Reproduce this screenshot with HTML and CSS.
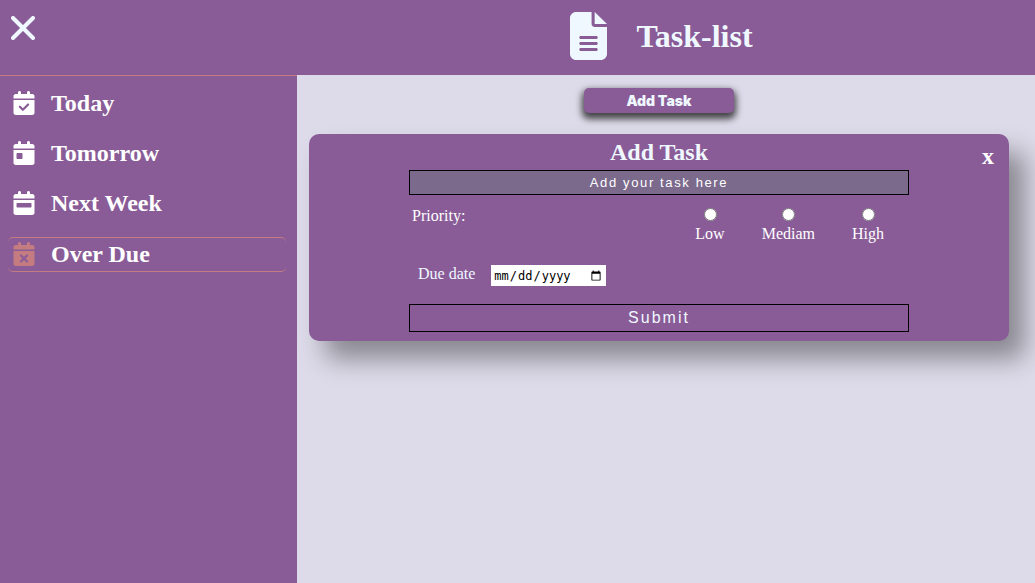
FILE: index.html
```html
<!DOCTYPE html>
<html lang="en">
<head>
<meta charset="utf-8">
<meta name="viewport" content="width=device-width, initial-scale=1">
<title>Task-list</title>
<link rel="stylesheet" href="styles.css">
</head>
<body>
<header class="header">
  <button class="menu-toggle" type="button" aria-label="Close menu">
    <svg class="menu-icon" viewBox="0 0 24 24"><path d="M2 2L22 22M22 2L2 22" fill="none" stroke="currentColor" stroke-width="4" stroke-linecap="round"/></svg>
  </button>
  <div class="brand">
    <svg class="brand-icon" viewBox="0 0 384 512" preserveAspectRatio="none" fill="currentColor"><path fill-rule="evenodd" d="M64 0C28.700 0 0 28.700 0 64V448c0 35.300 28.700 64 64 64H320c35.300 0 64-28.700 64-64V160H256c-17.700 0-32-14.300-32-32V0H64zM256 0V128H384L256 0zM112 256H272c8.800 0 16 7.200 16 16s-7.200 16-16 16H112c-8.800 0-16-7.200-16-16s7.200-16 16-16zm0 64H272c8.800 0 16 7.200 16 16s-7.200 16-16 16H112c-8.800 0-16-7.200-16-16s7.200-16 16-16zm0 64H272c8.800 0 16 7.200 16 16s-7.200 16-16 16H112c-8.800 0-16-7.200-16-16s7.200-16 16-16z"/></svg>
    <h1 class="brand-name">Task-list</h1>
  </div>
</header>
<div class="layout">
  <nav class="sidebar">
    <ul class="nav-list">
      <li><a class="nav-item" href="#today">
        <svg class="nav-icon" viewBox="0 0 448 512" fill="currentColor"><path fill-rule="evenodd" d="M128 0c17.700 0 32 14.300 32 32V64H288V32c0-17.700 14.300-32 32-32s32 14.300 32 32V64h48c26.500 0 48 21.500 48 48v48H0V112C0 85.500 21.500 64 48 64H96V32c0-17.700 14.300-32 32-32zM0 192H448V464c0 26.500-21.500 48-48 48H48c-26.500 0-48-21.500-48-48V192zM329 305c9.400-9.400 9.400-24.600 0-33.900s-24.600-9.400-33.900 0l-95 95-47-47c-9.400-9.400-24.600-9.400-33.900 0s-9.400 24.600 0 33.900l64 64c9.400 9.400 24.600 9.400 33.900 0L329 305z"/></svg>
        <span>Today</span></a></li>
      <li><a class="nav-item" href="#tomorrow">
        <svg class="nav-icon" viewBox="0 0 448 512" fill="currentColor"><path fill-rule="evenodd" d="M128 0c17.700 0 32 14.300 32 32V64H288V32c0-17.700 14.300-32 32-32s32 14.300 32 32V64h48c26.500 0 48 21.500 48 48v48H0V112C0 85.500 21.500 64 48 64H96V32c0-17.700 14.300-32 32-32zM0 192H448V464c0 26.500-21.500 48-48 48H48c-26.500 0-48-21.500-48-48V192zM80 256c-8.800 0-16 7.200-16 16v96c0 8.800 7.200 16 16 16h96c8.800 0 16-7.200 16-16V272c0-8.800-7.200-16-16-16H80z"/></svg>
        <span>Tomorrow</span></a></li>
      <li><a class="nav-item" href="#next-week">
        <svg class="nav-icon" viewBox="0 0 448 512" fill="currentColor"><path fill-rule="evenodd" d="M128 0c17.700 0 32 14.300 32 32V64H288V32c0-17.700 14.300-32 32-32s32 14.300 32 32V64h48c26.500 0 48 21.500 48 48v48H0V112C0 85.500 21.500 64 48 64H96V32c0-17.700 14.300-32 32-32zM0 192H448V464c0 26.500-21.500 48-48 48H48c-26.500 0-48-21.500-48-48V192zM80 256c-8.800 0-16 7.200-16 16v64c0 8.800 7.200 16 16 16H368c8.800 0 16-7.200 16-16V272c0-8.800-7.200-16-16-16H80z"/></svg>
        <span>Next Week</span></a></li>
      <li><a class="nav-item nav-item-overdue" href="#over-due">
        <svg class="nav-icon" viewBox="0 0 448 512" fill="currentColor"><path fill-rule="evenodd" d="M128 0c17.700 0 32 14.300 32 32V64H288V32c0-17.700 14.300-32 32-32s32 14.300 32 32V64h48c26.500 0 48 21.500 48 48v48H0V112C0 85.500 21.500 64 48 64H96V32c0-17.700 14.300-32 32-32zM0 192H448V464c0 26.500-21.500 48-48 48H48c-26.500 0-48-21.500-48-48V192zM305 305c9.400-9.400 9.400-24.600 0-33.900s-24.600-9.400-33.900 0l-47 47-47-47c-9.400-9.400-24.600-9.400-33.900 0s-9.400 24.600 0 33.900l47 47-47 47c-9.400 9.400-9.400 24.600 0 33.900s24.600 9.400 33.900 0l47-47 47 47c9.400 9.400 24.600 9.400 33.900 0s9.400-24.600 0-33.900l-47-47 47-47z"/></svg>
        <span>Over Due</span></a></li>
    </ul>
  </nav>
  <main class="main">
    <button class="add-button" type="button">Add Task</button>
    <section class="card">
      <form class="task-form">
        <h2 class="form-title">Add Task</h2>
        <input class="task-input" type="text" placeholder="Add your task here" aria-label="Task">
        <div class="priority" role="radiogroup" aria-labelledby="priority-title">
          <span id="priority-title">Priority:</span>
          <div class="priority-options">
            <label class="option"><input class="radio" type="radio" name="priority" value="low">Low</label>
            <label class="option"><input class="radio" type="radio" name="priority" value="medium">Mediam</label>
            <label class="option"><input class="radio" type="radio" name="priority" value="high">High</label>
          </div>
        </div>
        <div class="due">
          <label for="due">Due date</label>
          <input class="date-input" id="due" type="date">
        </div>
        <button class="submit" type="submit">Submit</button>
      </form>
      <button class="close" type="button" aria-label="Close form">x</button>
    </section>
  </main>
</div>
</body>
</html>
```

FILE: styles.css
```css
* {
  box-sizing: border-box;
}

:root {
  --purple: #895c97;
  --light: #f0f8ff;
  --accent: #c47c80;
  --sidebar: 297px;
}

body {
  margin: 0;
  min-height: 100vh;
  display: flex;
  flex-direction: column;
  background: #dddbe9;
  color: #fff;
  font-family: "Liberation Serif", "Times New Roman", serif;
  font-size: 16px;
  line-height: 18px;
}

button {
  border: 0;
  background: none;
  padding: 0;
  color: inherit;
  font-family: inherit;
  cursor: pointer;
}

.header {
  display: grid;
  grid-template-columns: var(--sidebar) 1fr;
  min-height: 75px;
  background: var(--purple);
  color: var(--light);
}

.menu-toggle {
  align-self: start;
  justify-self: start;
  padding: 16px 11px;
}

.menu-icon {
  display: block;
  width: 24px;
  height: 24px;
}

.brand {
  display: flex;
  align-items: center;
  justify-content: center;
  gap: 29px;
  padding: 0 9px 3px 0;
}

.brand-icon {
  width: 37px;
  height: 48px;
}

.brand-name {
  margin: 0;
  font-size: 32px;
  line-height: 36px;
}

.layout {
  flex: 1;
  display: grid;
  grid-template-columns: var(--sidebar) 1fr;
}

.sidebar {
  padding: 11px 11px 11px 8px;
  border-top: 1px solid var(--accent);
  background: var(--purple);
}

.nav-list {
  display: grid;
  gap: 15px;
  margin: 0;
  padding: 0;
  list-style: none;
}

.nav-item {
  display: flex;
  align-items: center;
  gap: 16px;
  height: 35px;
  padding: 0 5px 3px;
  border-radius: 5px;
  color: #fff;
  font-size: 24px;
  font-weight: bold;
  line-height: 28px;
  text-decoration: none;
}

.nav-item-overdue {
  padding-bottom: 2px;
  border: 0 solid var(--accent);
  border-width: 1px 0;
}

.nav-item-overdue .nav-icon {
  color: var(--accent);
}

.nav-icon {
  width: 22px;
  height: 24px;
}

.main {
  display: flex;
  flex-direction: column;
  align-items: center;
  gap: 21px;
  padding: 13px 26px 24px 12px;
}

.add-button {
  width: 150px;
  height: 25px;
  border-radius: 5px;
  background: var(--purple);
  box-shadow: 0 4px 7px 2px rgba(0, 0, 0, 0.7);
  color: var(--light);
  font-family: "Arial Black", Inter, sans-serif;
  font-size: 14px;
  font-weight: 900;
}

.card {
  display: grid;
  grid-template-columns: 1fr minmax(0, 500px) 1fr;
  width: 100%;
  padding: 4px 0 9px;
  border-radius: 10px;
  background: var(--purple);
  box-shadow: 16px 18px 26px rgba(0, 0, 0, 0.38);
}

.task-form {
  grid-column: 2;
  display: flex;
  flex-direction: column;
}

.form-title {
  margin: 0 0 4px;
  color: var(--light);
  font-size: 24px;
  line-height: 28px;
  text-align: center;
}

.task-input {
  width: 100%;
  height: 25px;
  padding: 1px 2px;
  border: 1px solid #000;
  border-radius: 0;
  background: #7b6a8c;
  color: #fff;
  font-family: "Liberation Sans", Arial, sans-serif;
  font-size: 13px;
  letter-spacing: 0.125em;
  text-align: center;
}

.task-input::placeholder {
  color: #fff;
}

.priority {
  display: flex;
  justify-content: space-between;
  margin-top: 12px;
  padding: 0 25px 0 3px;
}

.priority-options {
  display: flex;
  gap: 37px;
}

.option {
  display: flex;
  flex-direction: column;
  align-items: center;
  gap: 4px;
}

.radio {
  width: 13px;
  height: 13px;
  margin: 1px 0 0;
}

.due {
  display: flex;
  align-items: flex-start;
  gap: 16px;
  margin: 22px 0 18px;
  padding-left: 9px;
  color: var(--light);
}

.date-input {
  width: 115px;
  height: 21px;
  padding: 0 2px;
  border: 0;
  background: #fff;
  color: #000;
  font-family: "DejaVu Sans Mono", monospace;
  font-size: 12px;
}

.submit {
  height: 28px;
  border: 1px solid #000;
  color: var(--light);
  font-family: "Liberation Sans", Arial, sans-serif;
  font-size: 16px;
  letter-spacing: 0.125em;
}

.close {
  grid-column: 3;
  align-self: start;
  justify-self: end;
  margin: 4px 15px 0 0;
  font-size: 24px;
  font-weight: bold;
  line-height: 28px;
}
```
